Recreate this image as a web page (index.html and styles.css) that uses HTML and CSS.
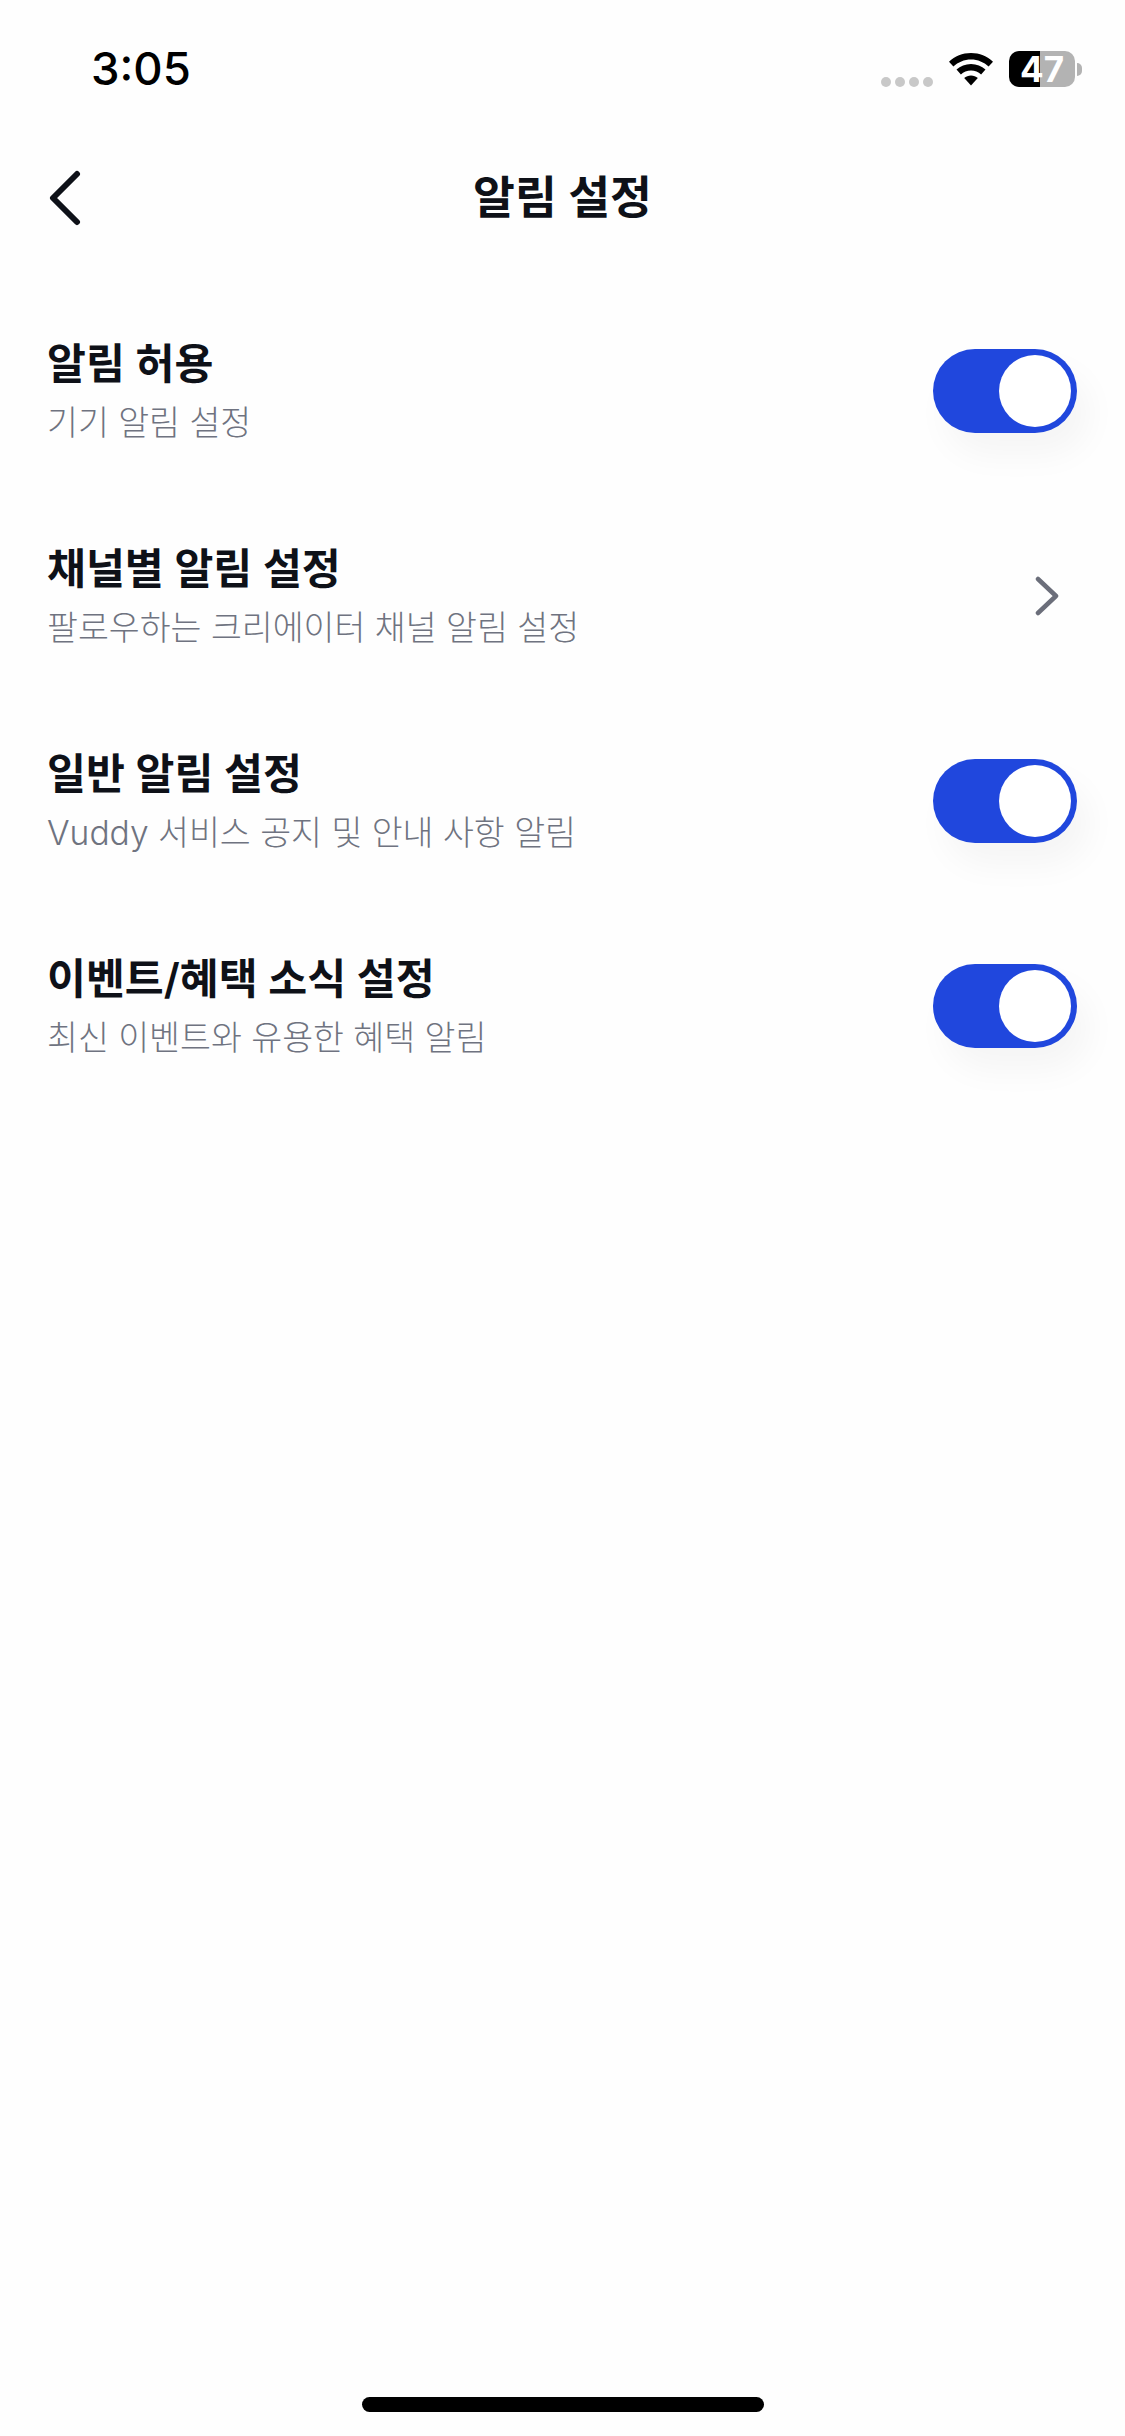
FILE: index.html
```html
<!DOCTYPE html>
<html lang="ko">
<head>
    <meta charset="UTF-8">
    <meta name="viewport" content="width=device-width, initial-scale=1.0">
    <title>알림 설정</title>
    <link rel="stylesheet" href="styles.css">
</head>
<body>

<div class="page">
  <div class="status-bar">
    <span class="time">3:05</span>
    <div class="status-icons">
      <div class="dots"><i></i><i></i><i></i><i></i></div>
      <svg class="wifi" width="46" height="34" viewBox="0 0 46 34">
        <path d="M23 1C14.500 1 6.800 4.300 1 9.700l4.400 4.800C10.100 10.200 16.200 7.500 23 7.500s12.900 2.700 17.600 7L45 9.700C39.200 4.300 31.500 1 23 1z" fill="#000"/>
        <path d="M23 12C17.400 12 12.400 14.100 8.500 17.600l4.400 4.800C15.600 20 19.100 18.500 23 18.500s7.400 1.500 10.100 3.900l4.400-4.800C33.600 14.100 28.600 12 23 12z" fill="#000"/>
        <path d="M23 23.500c-2.600 0-5 1-6.800 2.600L23 33.500l6.800-7.400c-1.800-1.600-4.200-2.600-6.800-2.600z" fill="#000"/>
      </svg>
      <div class="battery">47</div>
      <div class="battery-nub"></div>
    </div>
  </div>

  <div class="nav">
    <button class="back" type="button">
      <svg width="34" height="60" viewBox="0 0 34 60">
        <path d="M28 6L4 30l24 24" fill="none" stroke="#0e1118" stroke-width="6" stroke-linecap="round" stroke-linejoin="round"/>
      </svg>
    </button>
    <h1>알림 설정</h1>
  </div>

  <div class="list">
    <div class="row">
      <div class="row-text">
        <h2>알림 허용</h2>
        <p>기기 알림 설정</p>
      </div>
      <div class="toggle"><span class="knob"></span></div>
    </div>
    <div class="row">
      <div class="row-text">
        <h2>채널별 알림 설정</h2>
        <p>팔로우하는 크리에이터 채널 알림 설정</p>
      </div>
      <svg class="arrow" width="24" height="40" viewBox="0 0 24 40">
        <path d="M3 3l18 17L3 37" fill="none" stroke="#6b6e7a" stroke-width="4.500" stroke-linecap="round" stroke-linejoin="round"/>
      </svg>
    </div>
    <div class="row">
      <div class="row-text">
        <h2>일반 알림 설정</h2>
        <p>Vuddy 서비스 공지 및 안내 사항 알림</p>
      </div>
      <div class="toggle"><span class="knob"></span></div>
    </div>
    <div class="row">
      <div class="row-text">
        <h2>이벤트/혜택 소식 설정</h2>
        <p>최신 이벤트와 유용한 혜택 알림</p>
      </div>
      <div class="toggle"><span class="knob"></span></div>
    </div>
  </div>

  <div class="home-bar"></div>
</div>

</body>
</html>
```

FILE: styles.css
```css
body {
    margin: 0;
    background: #fefefe;
    font-family: Inter, "Noto Sans CJK KR", sans-serif;
}
.page {
    height: 2436px;
    display: flex;
    flex-direction: column;
    overflow: hidden;
}
.status-bar {
    height: 136px;
    display: flex;
    justify-content: space-between;
    align-items: flex-start;
    padding: 0 43px 0 91px;
    box-sizing: border-box;
}
.time {
    margin-top: 41px;
    font-size: 45.500px;
    line-height: 56px;
    font-weight: 500;
    color: #000;
}
.status-icons {
    display: flex;
    align-items: center;
    margin-top: 51px;
    height: 36px;
}
.dots {
    display: flex;
    gap: 4px;
    margin: 25px 15px 0 0;
}
.dots i {
    width: 10px;
    height: 10px;
    border-radius: 50%;
    background: #c8c8c8;
}
.wifi {
    margin-right: 15px;
}
.battery {
    width: 66px;
    height: 36px;
    border-radius: 10px;
    background: linear-gradient(to right, #000 47%, #b3b3b3 47%);
    color: #fff;
    font-size: 35px;
    font-weight: 700;
    line-height: 36px;
    text-align: center;
}
.battery-nub {
    width: 5px;
    height: 13px;
    margin-left: 2px;
    border-radius: 0 6px 6px 0;
    background: #b3b3b3;
}
.nav {
    height: 122px;
    position: relative;
    display: flex;
    align-items: center;
    justify-content: center;
}
.back {
    position: absolute;
    left: 49px;
    top: 32px;
    padding: 0;
    border: none;
    background: none;
    line-height: 0;
}
.nav h1 {
    margin: 0 0 6px;
    font-size: 45.500px;
    font-weight: 600;
    color: #0e1118;
}
.list {
    padding: 30px 48px 0 47px;
}
.row {
    height: 205px;
    display: flex;
    align-items: center;
    justify-content: space-between;
}
.row-text h2 {
    margin: 0;
    font-size: 42.300px;
    line-height: 56px;
    font-weight: 600;
    color: #0e1118;
}
.row-text p {
    margin: 8px 0 0;
    font-size: 33.600px;
    line-height: 46px;
    font-weight: 300;
    color: #6f7380;
}
.toggle {
    width: 144px;
    height: 84px;
    padding: 6px;
    box-sizing: border-box;
    display: flex;
    justify-content: flex-end;
    border-radius: 42px;
    background: #2047dd;
    box-shadow: 12px 22px 34px rgba(0, 0, 0, 0.04);
}
.knob {
    width: 72px;
    height: 72px;
    border-radius: 50%;
    background: #fff;
}
.arrow {
    margin-right: 18px;
}
.home-bar {
    width: 402px;
    height: 15px;
    margin: auto auto 24px;
    border-radius: 8px;
    background: #000;
}
```
